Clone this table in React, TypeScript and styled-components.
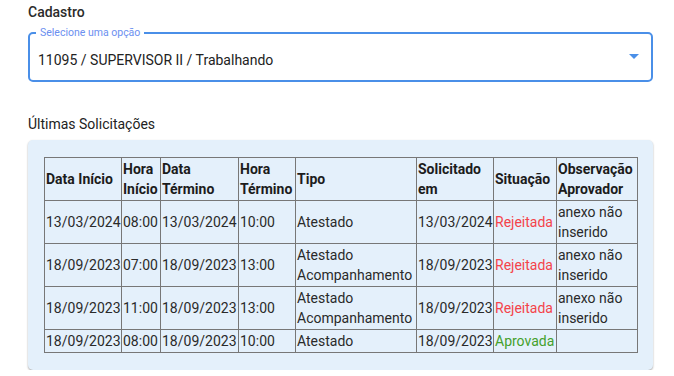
import styled, { createGlobalStyle } from "styled-components";

const GlobalStyle = createGlobalStyle`
  body {
    margin: 0;
    background: #ffffff;
    font-family: Roboto, "Liberation Sans", Arial, sans-serif;
    color: #212121;
  }
`;

const solicitacoes_data = {
  cadastro: "Cadastro",
  selectLabel: "Selecione uma opção",
  selected: "11095 / SUPERVISOR II / Trabalhando",
  title: "Últimas Solicitações",
  columns: [
    { label: "Data Início", width: 77 },
    { label: "Hora Início", width: 39 },
    { label: "Data Término", width: 78 },
    { label: "Hora Término", width: 57 },
    { label: "Tipo", width: 121 },
    { label: "Solicitado em", width: 77 },
    { label: "Situação", width: 63 },
    { label: "Observação Aprovador", width: 81 },
  ],
  rows: [
    ["13/03/2024", "08:00", "13/03/2024", "10:00", "Atestado", "13/03/2024", "Rejeitada", "anexo não inserido"],
    ["18/09/2023", "07:00", "18/09/2023", "13:00", "Atestado Acompanhamento", "18/09/2023", "Rejeitada", "anexo não inserido"],
    ["18/09/2023", "11:00", "18/09/2023", "13:00", "Atestado Acompanhamento", "18/09/2023", "Rejeitada", "anexo não inserido"],
    ["18/09/2023", "08:00", "18/09/2023", "10:00", "Atestado", "18/09/2023", "Aprovada", ""],
  ],
};

const Page = styled.div`
  margin: 0 21px 0 28px;
  padding-top: 2px;
`;

const FieldTitle = styled.div`
  font-size: 14px;
  font-weight: 500;
  line-height: 20px;
  color: #2b2b2b;
`;

const SelectBox = styled.div`
  position: relative;
  margin-top: 10px;
  height: 50px;
  box-sizing: border-box;
  border: 2px solid #4a8fe8;
  border-radius: 5px;
  display: flex;
  align-items: center;
  padding: 6px 12px 0 8px;
`;

const SelectLabel = styled.span`
  position: absolute;
  top: -8px;
  left: 6px;
  padding: 0 4px;
  background: #ffffff;
  font-size: 10.5px;
  line-height: 14px;
  color: #6b8ff0;
`;

const SelectValue = styled.span`
  flex: 1;
  font-size: 14px;
  line-height: 20px;
  color: #222222;
`;

const Arrow = styled.span`
  width: 0;
  height: 0;
  margin-top: -8px;
  border-left: 5px solid transparent;
  border-right: 5px solid transparent;
  border-top: 5px solid #4a8fe8;
`;

const SectionTitle = styled.div`
  margin-top: 32px;
  font-size: 14px;
  line-height: 20px;
  color: #222222;
`;

const Panel = styled.div`
  margin-top: 6px;
  background: #e4f0fb;
  border-radius: 5px;
  box-shadow: 0 1px 2px rgba(0, 0, 0, 0.35);
  padding: 17px 16px 17px;
`;

const Table = styled.table`
  width: 100%;
  table-layout: fixed;
  border-collapse: collapse;
  font-size: 14px;
  line-height: 20px;
`;

const HeadCell = styled.th`
  border: 1px solid #777777;
  padding: 1px;
  text-align: left;
  font-weight: 700;
  color: #1c1c1c;
`;

const Cell = styled.td<{ $status?: string }>`
  border: 1px solid #777777;
  padding: 1px;
  color: ${({ $status }) =>
    $status === "Rejeitada" ? "#f4434a" : $status === "Aprovada" ? "#44a02c" : "#2a2a2a"};
`;

export default function App() {
  return (
    <>
      <GlobalStyle />
      <Page>
        <FieldTitle>{solicitacoes_data.cadastro}</FieldTitle>
        <SelectBox>
          <SelectLabel>{solicitacoes_data.selectLabel}</SelectLabel>
          <SelectValue>{solicitacoes_data.selected}</SelectValue>
          <Arrow />
        </SelectBox>
        <SectionTitle>{solicitacoes_data.title}</SectionTitle>
        <Panel>
          <Table>
            <colgroup>
              {solicitacoes_data.columns.map((c) => (
                <col key={c.label} style={{ width: c.width }} />
              ))}
            </colgroup>
            <thead>
              <tr>
                {solicitacoes_data.columns.map((c) => (
                  <HeadCell key={c.label}>{c.label}</HeadCell>
                ))}
              </tr>
            </thead>
            <tbody>
              {solicitacoes_data.rows.map((row, i) => (
                <tr key={i}>
                  {row.map((value, j) => (
                    <Cell key={j} $status={j === 6 ? value : undefined}>
                      {value}
                    </Cell>
                  ))}
                </tr>
              ))}
            </tbody>
          </Table>
        </Panel>
      </Page>
    </>
  );
}
